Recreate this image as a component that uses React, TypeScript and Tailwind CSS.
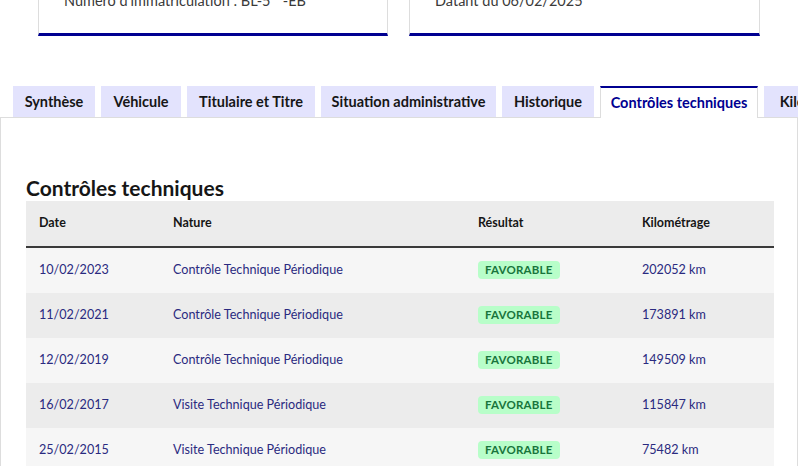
import React from "react";

const tabs = [
  { label: "Synthèse", w: "w-[82px]" },
  { label: "Véhicule", w: "w-[80px]" },
  { label: "Titulaire et Titre", w: "w-[128px]" },
  { label: "Situation administrative", w: "w-[175px]" },
  { label: "Historique", w: "w-[92px]" },
  { label: "Contrôles techniques", w: "w-[158px]", active: true },
  { label: "Kilométrage", w: "w-[110px]" },
];

const rows = [
  { date: "10/02/2023", nature: "Contrôle Technique Périodique", km: "202052 km" },
  { date: "11/02/2021", nature: "Contrôle Technique Périodique", km: "173891 km" },
  { date: "12/02/2019", nature: "Contrôle Technique Périodique", km: "149509 km" },
  { date: "16/02/2017", nature: "Visite Technique Périodique", km: "115847 km" },
  { date: "25/02/2015", nature: "Visite Technique Périodique", km: "75482 km" },
];

const cols = "grid grid-cols-[134px_305px_164px_145px]";

export default function App() {
  return (
    <div className="h-[466px] w-[798px] overflow-hidden bg-white text-[#161616] [font-family:Lato,'Noto_Sans',sans-serif]">
      <div className="flex gap-[21px] pl-[38px] -mt-[24px]">
        <div className="w-[350px] h-[60px] border border-[#dddddd] border-b-[3px] border-b-[#000091] bg-white pl-[25px] pt-[12px]">
          <p className="text-[14.5px] leading-6 text-[#3a3a3a]">Numéro d'immatriculation : BL-5**-EB</p>
        </div>
        <div className="w-[351px] h-[60px] border border-[#dddddd] border-b-[3px] border-b-[#000091] bg-white pl-[25px] pt-[12px]">
          <p className="text-[14.5px] leading-6 text-[#3a3a3a]">Datant du 06/02/2025</p>
        </div>
      </div>

      <div className="mt-[50px] flex gap-[6px] pl-[13px] relative z-10">
        {tabs.map((t) => (
          <div
            key={t.label}
            className={
              t.active
                ? `${t.w} shrink-0 h-[32px] flex items-center justify-center bg-white border-t-2 border-t-[#000091] border-x border-x-[#dddddd] text-[14.5px] font-bold text-[#000091]`
                : `${t.w} shrink-0 h-[31px] flex items-center justify-center bg-[#e3e3fd] text-[14.5px] font-bold text-[#161616]`
            }
          >
            <span className="whitespace-nowrap">{t.label}</span>
          </div>
        ))}
      </div>

      <div className="-mt-px border border-[#dddddd] px-[25px] pt-[58px]">
        <h2 className="text-[21px] leading-6 font-bold mb-px">Contrôles techniques</h2>
        <div className="w-[748px]">
          <div className={`${cols} h-[47px] bg-[#ececec] border-b-2 border-b-[#3a3a3a] items-center text-[12.5px] font-bold`}>
            <div className="pl-[13px]">Date</div>
            <div className="pl-[13px]">Nature</div>
            <div className="pl-[13px]">Résultat</div>
            <div className="pl-[13px]">Kilométrage</div>
          </div>
          {rows.map((r, i) => (
            <div
              key={r.date}
              className={`${cols} h-[45px] items-center text-[12.6px] text-[#2a2a80] ${i % 2 === 0 ? "bg-[#f6f6f6]" : "bg-[#ececec]"}`}
            >
              <div className="pl-[13px]">{r.date}</div>
              <div className="pl-[13px]">{r.nature}</div>
              <div className="pl-[13px]">
                <span className="inline-flex h-[18px] items-center rounded-[4px] bg-[#b8fec9] px-[7px] text-[11.5px] font-bold tracking-[0.2px] text-[#18753c]">
                  FAVORABLE
                </span>
              </div>
              <div className="pl-[13px]">{r.km}</div>
            </div>
          ))}
        </div>
      </div>
    </div>
  );
}
